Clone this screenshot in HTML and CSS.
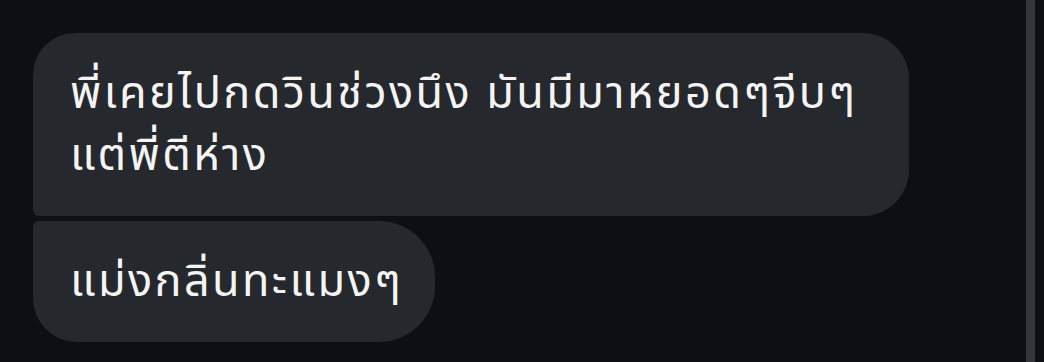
FILE: index.html
```html
<!DOCTYPE html>
<html lang="th">
<head>
<meta charset="utf-8">
<link rel="stylesheet" href="styles.css">
</head>
<body>
<div class="screen">
  <div class="thread">
    <div class="bubble bubble-first">พี่เคยไปกดวินช่วงนึง มันมีมาหยอดๆจีบๆ<br>แต่พี่ตีห่าง</div>
    <div class="bubble bubble-last">แม่งกลิ่นทะแมงๆ</div>
  </div>
  <div class="scrollbar"></div>
</div>
</body>
</html>
```
FILE: styles.css
```css
html, body {
  margin: 0;
  padding: 0;
  background: #0c0f13;
}
.screen {
  display: flex;
  height: 362px;
  width: 1044px;
  overflow: hidden;
}
.thread {
  flex: 1;
  display: flex;
  flex-direction: column;
  align-items: flex-start;
  gap: 5px;
  padding: 33px 0 0 33px;
}
.bubble {
  background: #25282c;
  color: #f4f4f4;
  font-family: "Noto Sans Thai", "Noto Sans", "Liberation Sans", sans-serif;
  font-size: 45px;
  letter-spacing: 2.4px;
  line-height: 62px;
  padding: 30px 51px 29px 37px;
}
.bubble-first {
  border-radius: 42px 46px 46px 6px;
}
.bubble-last {
  border-radius: 6px 56px 56px 44px;
  padding-right: 32px;
}
.scrollbar {
  width: 9px;
  margin-right: 9px;
  background: #33373b;
}
```
